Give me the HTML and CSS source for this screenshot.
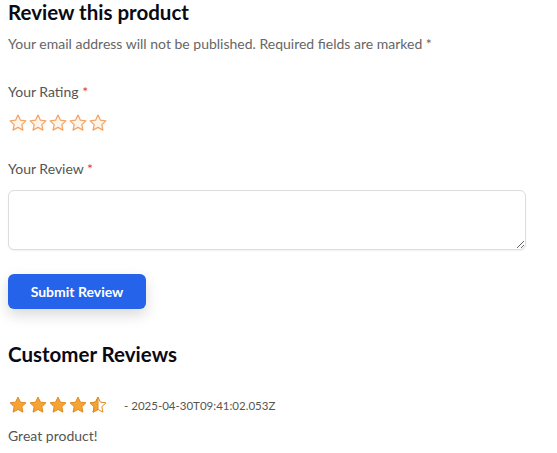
FILE: index.html
```html
<!DOCTYPE html>
<html>
<head>
<meta charset="utf-8">
<link rel="stylesheet" href="styles.css">
</head>
<body>
<section class="review-form">
  <h2 class="title">Review this product</h2>
  <p class="note">Your email address will not be published. Required fields are marked *</p>
  <div class="field">
    <label class="label">Your Rating <span class="req">*</span></label>
    <div class="stars stars-input">
      <svg class="star" viewBox="0 0 24 24"><path d="M12 2.5l2.9 6.1 6.6.8-4.9 4.6 1.3 6.6L12 17.3l-5.9 3.3 1.3-6.6-4.9-4.6 6.6-.8z"/></svg>
      <svg class="star" viewBox="0 0 24 24"><path d="M12 2.5l2.9 6.1 6.6.8-4.9 4.6 1.3 6.6L12 17.3l-5.9 3.3 1.3-6.6-4.9-4.6 6.6-.8z"/></svg>
      <svg class="star" viewBox="0 0 24 24"><path d="M12 2.5l2.9 6.1 6.6.8-4.9 4.6 1.3 6.6L12 17.3l-5.9 3.3 1.3-6.6-4.9-4.6 6.6-.8z"/></svg>
      <svg class="star" viewBox="0 0 24 24"><path d="M12 2.5l2.9 6.1 6.6.8-4.9 4.6 1.3 6.6L12 17.3l-5.9 3.3 1.3-6.6-4.9-4.6 6.6-.8z"/></svg>
      <svg class="star" viewBox="0 0 24 24"><path d="M12 2.5l2.9 6.1 6.6.8-4.9 4.6 1.3 6.6L12 17.3l-5.9 3.3 1.3-6.6-4.9-4.6 6.6-.8z"/></svg>
    </div>
  </div>
  <div class="field">
    <label class="label">Your Review <span class="req">*</span></label>
    <textarea class="textarea"></textarea>
  </div>
  <button class="btn">Submit Review</button>
</section>
<section class="reviews">
  <h2 class="title">Customer Reviews</h2>
  <div class="review">
    <div class="review-head">
      <div class="stars stars-filled">
        <svg class="star" viewBox="0 0 24 24"><path d="M12 2.5l2.9 6.1 6.6.8-4.9 4.6 1.3 6.6L12 17.3l-5.9 3.3 1.3-6.6-4.9-4.6 6.6-.8z"/></svg>
        <svg class="star" viewBox="0 0 24 24"><path d="M12 2.5l2.9 6.1 6.6.8-4.9 4.6 1.3 6.6L12 17.3l-5.9 3.3 1.3-6.6-4.9-4.6 6.6-.8z"/></svg>
        <svg class="star" viewBox="0 0 24 24"><path d="M12 2.5l2.9 6.1 6.6.8-4.9 4.6 1.3 6.6L12 17.3l-5.9 3.3 1.3-6.6-4.9-4.6 6.6-.8z"/></svg>
        <svg class="star" viewBox="0 0 24 24"><path d="M12 2.5l2.9 6.1 6.6.8-4.9 4.6 1.3 6.6L12 17.3l-5.9 3.3 1.3-6.6-4.9-4.6 6.6-.8z"/></svg>
        <svg class="star half" viewBox="0 0 24 24"><path class="outline" d="M12 2.5l2.9 6.1 6.6.8-4.9 4.6 1.3 6.6L12 17.3l-5.9 3.3 1.3-6.6-4.9-4.6 6.6-.8z"/><path class="fill" d="M12 2.5L9.1 8.6l-6.6.8 4.9 4.6-1.3 6.6L12 17.3z"/></svg>
      </div>
      <span class="date">- 2025-04-30T09:41:02.053Z</span>
    </div>
    <p class="text">Great product!</p>
  </div>
</section>
</body>
</html>
```
FILE: styles.css
```css
body {
  margin: 0;
  padding: 0 8px;
  font-family: "Lato", "Open Sans", sans-serif;
  color: #555;
  background: #fff;
}
.title {
  margin: 0;
  font-size: 20.5px;
  font-weight: 700;
  color: #0a0a14;
  line-height: 24px;
}
.note {
  margin: 10px 0 0;
  font-size: 14px;
  line-height: 20px;
  color: #666;
}
.field {
  margin-top: 28px;
  display: flex;
  flex-direction: column;
}
.field + .field { margin-top: 26px; }
.label {
  font-size: 14px;
  line-height: 20px;
  color: #555;
}
.req { color: #e53935; }
.stars {
  display: flex;
  gap: 0;
}
.stars-input { margin-top: 11px; }
.star {
  width: 20px;
  height: 20px;
}
.stars-input .star path {
  fill: #fff4e8;
  stroke: #f0a56a;
  stroke-width: 1.5;
  stroke-linejoin: round;
}
.textarea {
  margin-top: 11px;
  height: 60px;
  box-sizing: border-box;
  width: 518px;
  border: 1px solid #ddd;
  border-radius: 6px;
  box-shadow: 0 1px 2px rgba(0,0,0,0.06);
  font: inherit;
  padding: 8px;
  resize: vertical;
}
.btn {
  margin-top: 24px;
  width: 138px;
  height: 35px;
  background: #2563eb;
  color: #fff;
  border: 0;
  border-radius: 6px;
  font-family: inherit;
  font-size: 14px;
  font-weight: 700;
  box-shadow: 0 6px 14px rgba(0,0,0,0.15);
  cursor: pointer;
}
.reviews { margin-top: 33px; }
.review { margin-top: 29px; }
.review-head {
  display: flex;
  align-items: center;
  gap: 16px;
}
.stars-filled .star path {
  fill: #f7a334;
  stroke: #e08a1e;
  stroke-width: 1.2;
  stroke-linejoin: round;
}
.stars-filled .star.half .outline {
  fill: #fff;
}
.date {
  font-size: 11.5px;
  color: #555;
}
.text {
  margin: 12px 0 0;
  font-size: 14px;
  color: #555;
}
```
